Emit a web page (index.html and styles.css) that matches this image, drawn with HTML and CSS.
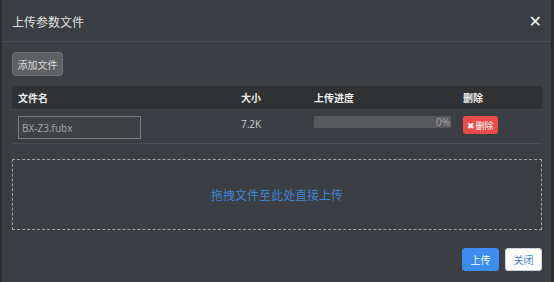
FILE: index.html
```html
<!DOCTYPE html>
<html lang="zh-CN">
<head>
    <meta charset="UTF-8">
    <title>上传参数文件</title>
    <link rel="stylesheet" href="styles.css">
</head>
<body>
    <div class="backdrop-strip"></div>
    <div class="modal">
        <!-- Header -->
        <div class="modal-header">
            <span class="modal-title">上传参数文件</span>
            <span class="close">&#x2715;</span>
        </div>

        <!-- Body -->
        <div class="modal-body">
            <button class="btn-add">添加文件</button>

            <table class="file-table">
                <thead>
                    <tr>
                        <th class="col-name">文件名</th>
                        <th class="col-size">大小</th>
                        <th class="col-progress">上传进度</th>
                        <th class="col-del">删除</th>
                    </tr>
                </thead>
                <tbody>
                    <tr>
                        <td><input class="name-input" type="text" value="BX-Z3.fubx"></td>
                        <td class="size">7.2K</td>
                        <td>
                            <div class="progress"><span>0%</span></div>
                        </td>
                        <td><button class="btn-del">&#x2716;删除</button></td>
                    </tr>
                </tbody>
            </table>

            <div class="dropzone">拖拽文件至此处直接上传</div>
        </div>

        <!-- Footer -->
        <div class="modal-footer">
            <button class="btn-upload">上传</button>
            <button class="btn-close">关闭</button>
        </div>
    </div>
</body>
</html>
```

FILE: styles.css
```css
/* General */
body {
    margin: 0;
    background: #2a2d30;
    font-family: "Open Sans", "Noto Sans CJK SC", sans-serif;
    height: 282px;
    overflow: hidden;
    position: relative;
}

.backdrop-strip {
    position: absolute;
    top: 0;
    left: 107px;
    width: 314px;
    height: 3px;
    background: #5f5a4a;
}

.modal {
    position: relative;
    margin: 0 3px 0 2px;
    height: 282px;
    background: #3b3e42;
    color: #ddd;
    box-sizing: border-box;
}

/* Header */
.modal-header {
    height: 41px;
    display: flex;
    align-items: center;
    justify-content: space-between;
    padding: 0 9px 0 10px;
    border-bottom: 1px solid #4a4d51;
}

.modal-title {
    font-size: 12px;
    color: #e0e0e0;
    padding-top: 2px;
}

.close {
    font-size: 16px;
    font-weight: bold;
    color: #f2f2f2;
    font-family: "DejaVu Sans", sans-serif;
    padding-top: 2px;
}

/* Body */
.modal-body {
    padding: 10px 9px 0 10px;
}

.btn-add {
    display: block;
    height: 24px;
    width: 51px;
    padding: 0;
    background: #5e6164;
    border: 1px solid #6c6f72;
    border-radius: 3px;
    color: #dadada;
    font-family: inherit;
    font-size: 10px;
}

.file-table {
    width: 100%;
    margin-top: 10px;
    border-collapse: collapse;
    font-size: 10px;
}

.file-table th {
    background: #2f3133;
    height: 23px;
    text-align: left;
    font-weight: bold;
    color: #f0f0f0;
    padding: 0 6px;
    border-bottom: 1px solid #44474a;
}

.col-name { width: 211px; }
.col-size { width: 61px; }
.col-progress { width: 136px; }

.file-table td {
    padding: 6px 6px 4px;
    border-bottom: 1px solid #4a4d51;
    color: #ccc;
    vertical-align: top;
    line-height: 12px;
}

.name-input {
    display: block;
    width: 123px;
    height: 23px;
    box-sizing: border-box;
    margin: 0;
    background: #3f4245;
    border: 1px solid #7a7d80;
    color: #a8a8a8;
    font-family: inherit;
    font-size: 10px;
    padding: 0 3px;
}

.file-table td.size {
    padding-top: 8px;
}

.progress {
    height: 12px;
    width: 137px;
    background: #58595b;
    text-align: right;
    font-size: 10px;
    line-height: 12px;
    color: #aaa;
}

.progress span {
    padding-right: 1px;
}

.btn-del {
    display: block;
    height: 18px;
    width: 35px;
    padding: 0;
    background: #e94b4b;
    border: none;
    border-radius: 3px;
    color: #fff;
    font-family: inherit;
    font-size: 9px;
}

.dropzone {
    margin-top: 15px;
    height: 69px;
    border: 1px dashed #a5a5a5;
    display: flex;
    align-items: center;
    justify-content: center;
    color: #3e86d8;
    font-size: 12px;
}

/* Footer */
.modal-footer {
    display: flex;
    justify-content: flex-end;
    gap: 6px;
    padding: 18px 9px 0 0;
}

.modal-footer button {
    height: 23px;
    width: 37px;
    padding: 0;
    border-radius: 3px;
    font-family: inherit;
    font-size: 10px;
}

.btn-upload {
    background: #3b8ef0;
    border: 1px solid #3b8ef0;
    color: #fff;
}

.btn-close {
    background: #fff;
    border: 1px solid #d0d4da;
    color: #3a7fd5;
}
```
